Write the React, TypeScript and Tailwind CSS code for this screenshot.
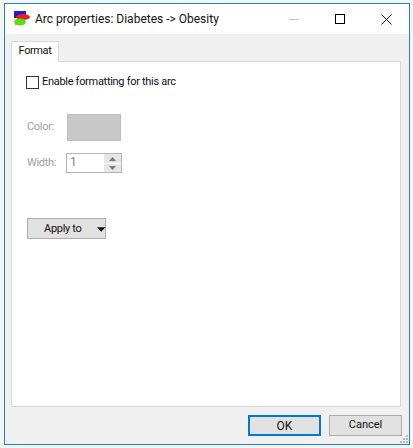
const uiFont = "font-['Roboto','Noto_Sans',sans-serif]";

function AppIcon() {
  return (
    <svg width="18" height="16" viewBox="0 0 18 16" className="shrink-0">
      <rect x="1" y="0" width="12" height="5" fill="#1f1fd8" />
      <rect x="1" y="5" width="5" height="2" fill="#2a2a80" />
      <ellipse cx="10" cy="6" rx="7" ry="3" fill="#ee1c1c" />
      <ellipse cx="7" cy="11" rx="6" ry="3.5" fill="#55e01a" />
      <rect x="2" y="12" width="3" height="2" fill="#c9a820" />
    </svg>
  );
}

function TitleBar() {
  return (
    <div className="flex h-[30px] items-center bg-white pl-[8px]">
      <AppIcon />
      <span className="ml-[4px] text-[12px] leading-none text-[#111]">Arc properties: Diabetes -&gt; Obesity</span>
      <div className="ml-auto flex h-full">
        <div className="flex w-[46px] items-center justify-center">
          <div className="h-px w-[10px] bg-[#c4c4c4]" />
        </div>
        <div className="flex w-[46px] items-center justify-center">
          <div className="size-[10px] border border-black" />
        </div>
        <div className="flex w-[46px] items-center justify-center">
          <svg width="11" height="11" viewBox="0 0 11 11">
            <path d="M0.5 0.5 L10.5 10.5 M10.5 0.5 L0.5 10.5" stroke="#111" strokeWidth="1" fill="none" />
          </svg>
        </div>
      </div>
    </div>
  );
}

function Spinner() {
  return (
    <div className="flex h-[20px] w-[56px] border border-[#b5b5b5] bg-white">
      <span className="flex-1 pl-[3px] text-[12px] leading-[17px] text-[#8a7a95]">1</span>
      <div className="flex w-[17px] flex-col items-center justify-center gap-[2px] bg-[#e6e6e6]">
        <svg width="7" height="4" viewBox="0 0 7 4"><path d="M3.5 0 L7 4 H0 Z" fill="#777" /></svg>
        <div className="h-px w-full bg-white" />
        <svg width="7" height="4" viewBox="0 0 7 4"><path d="M0 0 H7 L3.5 4 Z" fill="#777" /></svg>
      </div>
    </div>
  );
}

function FormatPanel() {
  return (
    <div className="flex h-[346px] flex-col border border-[#d9d9d9] bg-white pl-[14px] pt-[13px] text-[11px] tracking-[-0.3px]">
      <label className="flex h-[14px] items-center gap-[3px] text-[#111]">
        <span className="size-[13px] border border-[#333] bg-white" />
        Enable formatting for this arc
      </label>
      <div className="mt-[24px] ml-[1px] flex items-center pt-[1px]">
        <span className="w-[40px] text-[#a0a0a0]">Color:</span>
        <div className="h-[27px] w-[54px] border border-[#bdbdbd] bg-[#c8c8c8]" />
      </div>
      <div className="mt-[12px] ml-[1px] flex items-center">
        <span className="w-[39px] text-[#a0a0a0]">Width:</span>
        <Spinner />
      </div>
      <button className="mt-[45px] ml-[1px] flex h-[21px] w-[79px] items-center whitespace-nowrap border border-[#adadad] bg-[#e1e1e1] pl-[16px] pt-[1px] text-[#111]">
        <span>Apply to</span>
        <svg width="9" height="5" viewBox="0 0 9 5" className="ml-[15px]"><path d="M0 0 H9 L4.5 5 Z" fill="#111" /></svg>
      </button>
    </div>
  );
}

function Grip() {
  return (
    <svg width="10" height="10" viewBox="0 0 10 10" className="absolute bottom-0 right-0" fill="#b8b8b8">
      <rect x="7" y="1" width="2" height="2" />
      <rect x="4" y="4" width="2" height="2" />
      <rect x="7" y="4" width="2" height="2" />
      <rect x="1" y="7" width="2" height="2" />
      <rect x="4" y="7" width="2" height="2" />
      <rect x="7" y="7" width="2" height="2" />
    </svg>
  );
}

export default function App() {
  return (
    <div className={`h-[448px] w-[413px] overflow-hidden bg-[#f4f4f4] pl-[4px] pt-[3px] ${uiFont}`}>
      <div className="relative flex h-[442px] w-[406px] flex-col border border-[#1883d7] bg-[#f0f0f0]">
        <TitleBar />
        <div className="flex-1 pl-[6px] pr-[8px] pt-[7px]">
          <div className="relative z-10 -mb-px flex h-[21px] w-[48px] items-center justify-center border border-b-0 border-[#d9d9d9] bg-white pb-[1px] text-[11px] tracking-[-0.4px] text-[#111]">
            Format
          </div>
          <FormatPanel />
          <div className="mt-[8px] -mr-[1px] flex justify-end gap-[8px]">
            <button className="h-[21px] w-[73px] border-2 border-[#0078d7] bg-[#e1e1e1] text-[12px] text-[#111]">OK</button>
            <button className="h-[21px] w-[73px] border border-[#adadad] bg-[#e1e1e1] text-[11px] text-[#111]">Cancel</button>
          </div>
        </div>
        <Grip />
      </div>
    </div>
  );
}
